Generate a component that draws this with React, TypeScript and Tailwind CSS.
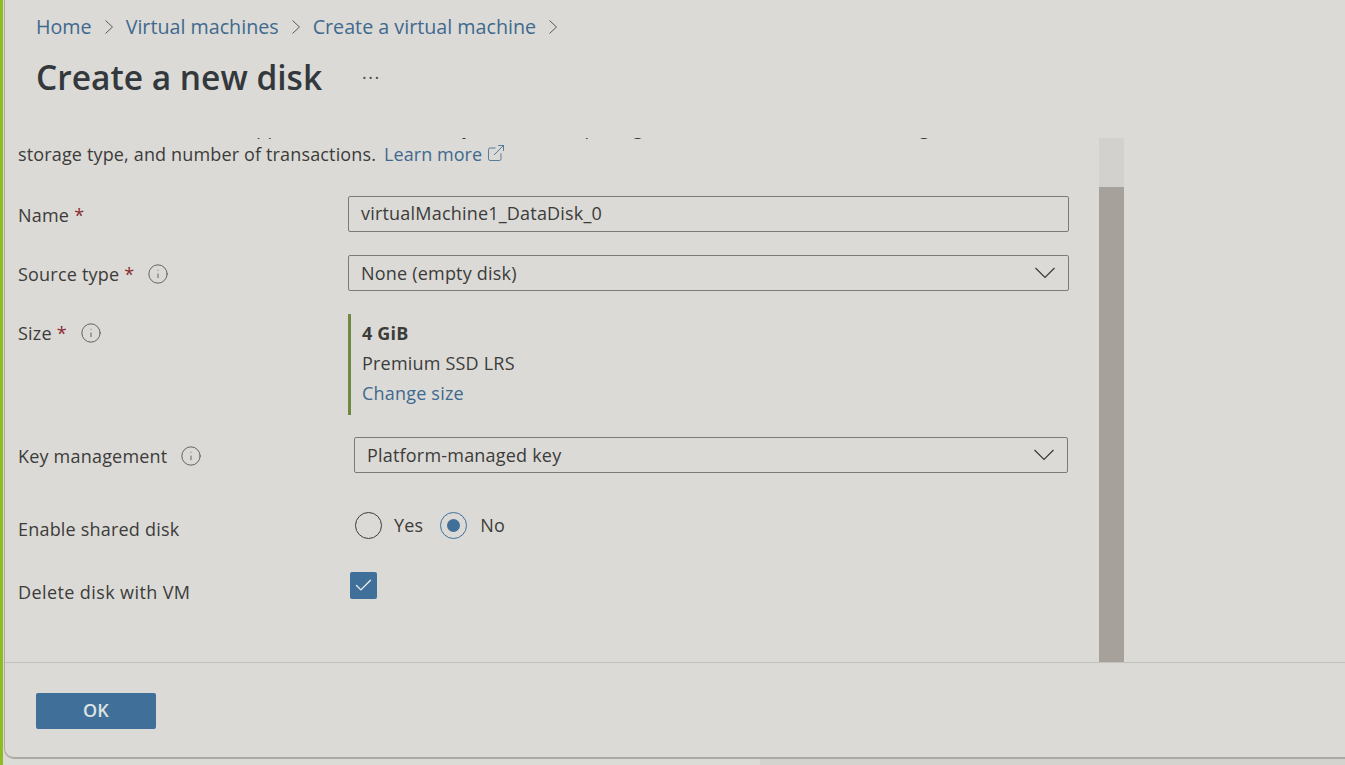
import React from 'react';
import { ExternalLink, Check, Info } from 'lucide-react';

const Crumb: React.FC<{ label: string }> = ({ label }) => (
  <>
    <span className="text-[#40698f]">{label}</span>
    <svg className="w-[10px] h-[16px] mx-[12px] text-[#55595c]" viewBox="0 0 10 16" fill="none" stroke="currentColor" strokeWidth="1">
      <polyline points="1.5,1.5 8.5,8 1.5,14.5" />
    </svg>
  </>
);

const Req = () => <span className="text-[#8a2b32] ml-[5px]">*</span>;

const Tip: React.FC<{ className?: string }> = ({ className }) => (
  <Info className={`w-[22px] h-[22px] text-[#4a4a48] ${className ?? ''}`} strokeWidth={0.9} />
);

const Row: React.FC<{ label: React.ReactNode; className?: string; children: React.ReactNode }> = ({ label, className, children }) => (
  <div className={`flex items-start ${className ?? ''}`}>
    <div className="w-[330px] shrink-0 flex items-center h-[36px] pt-[2px]">{label}</div>
    <div className="flex-1 min-w-0">{children}</div>
  </div>
);

const Select: React.FC<{ value: string; className?: string }> = ({ value, className }) => (
  <div className={`h-[36px] border border-[#7c7b77] rounded-[2px] flex items-center justify-between pl-[12px] pr-[13px] ${className ?? ''}`}>
    <span>{value}</span>
    <svg className="w-[20px] h-[12px] text-[#3a3a39]" viewBox="0 0 20 12" fill="none" stroke="currentColor" strokeWidth="1.2">
      <polyline points="0.5,1 10,10.5 19.5,1" />
    </svg>
  </div>
);

export default function App() {
  return (
    <div className="w-[1345px] h-[765px] overflow-hidden flex bg-[#dbdad6] text-[#3c3c3b] text-[18px] font-['Open_Sans','Noto_Sans',sans-serif] tracking-[0.2px]">
      <div className="w-[3px] shrink-0 bg-[#8fbc22]" />
      <div className="flex-1 flex flex-col min-w-0">
        <div className="h-[759px] ml-[1px] flex flex-col border-l border-b-2 border-[#aaa9a3] rounded-bl-[10px]">
          <div className="h-[138px] shrink-0 pl-[31px]">
            <div className="flex items-center h-[26px] mt-[14px] text-[19.7px] tracking-normal">
              <Crumb label="Home" />
              <Crumb label="Virtual machines" />
              <Crumb label="Create a virtual machine" />
            </div>
            <div className="flex items-center mt-[15px] h-[44px]">
              <h1 className="text-[33.5px] font-semibold text-[#32383c] tracking-normal">Create a new disk</h1>
              <span className="ml-[40px] text-[18px] text-[#4a4a48] leading-none mb-[1px] tracking-[1.5px]">···</span>
            </div>
          </div>

          <div className="flex-1 min-h-0 flex overflow-hidden">
            <div className="w-[1094px] shrink-0 pl-[13px] pr-[30px] overflow-hidden">
              <div className="h-[30px] flex flex-col justify-end overflow-hidden leading-[26px] pb-[1px]">
                <p className="whitespace-nowrap">Create a new disk to store applications and data on your VM. Disk pricing varies based on factors including disk size,</p>
                <div className="flex items-center tracking-[0.15px]">
                  <span>storage type, and number of transactions.</span>
                  <span className="text-[#40698f] ml-[8px] tracking-[0.05px]">Learn more</span>
                  <ExternalLink className="w-[20px] h-[20px] ml-[4px] mb-[3px] text-[#40698f]" strokeWidth={1} />
                </div>
              </div>

              <Row className="mt-[28px]" label={<>Name<Req /></>}>
                <div className="h-[36px] border border-[#7c7b77] rounded-[2px] flex items-center px-[12px] pb-[1px]">virtualMachine1_DataDisk_0</div>
              </Row>

              <Row className="mt-[23px]" label={<>Source type<Req /><Tip className="ml-[13px]" /></>}>
                <Select value="None (empty disk)" />
              </Row>

              <Row className="mt-[23px]" label={<>Size<Req /><Tip className="ml-[13px]" /></>}>
                <div className="h-[101px] border-l-[3px] border-[#6f8a3e] pl-[11px] pb-[3px] flex flex-col justify-center gap-[4px]">
                  <span className="font-bold leading-[26px]">4 GiB</span>
                  <span className="leading-[26px]">Premium SSD LRS</span>
                  <span className="text-[#40698f] leading-[26px]">Change size</span>
                </div>
              </Row>

              <Row className="mt-[22px]" label={<>Key management<Tip className="ml-[13px]" /></>}>
                <Select value="Platform-managed key" className="ml-[6px] mr-[1px]" />
              </Row>

              <Row className="mt-[35px]" label={<span className="mt-[4px]">Enable shared disk</span>}>
                <div className="flex items-center h-[30px] ml-[7px] mt-[2px]">
                  <span className="w-[27px] h-[27px] rounded-full border border-[#3c3c3b]" />
                  <span className="ml-[12px] mt-[1px]">Yes</span>
                  <span className="ml-[17px] w-[27px] h-[27px] rounded-full border border-[#40709a] flex items-center justify-center">
                    <span className="w-[13px] h-[13px] rounded-full bg-[#40709a]" />
                  </span>
                  <span className="ml-[13px] mt-[1px]">No</span>
                </div>
              </Row>

              <Row className="mt-[28px]" label={<span className="mt-[2px] tracking-[0.4px]">Delete disk with VM</span>}>
                <div className="ml-[2px] w-[27px] h-[27px] rounded-[2px] bg-[#40709a] flex items-center justify-center">
                  <Check className="w-[21px] h-[21px] text-[#f0f0ee]" strokeWidth={1.5} />
                </div>
              </Row>
            </div>
            <div className="w-[25px] shrink-0 flex flex-col">
              <div className="h-[49px] bg-[#d2d1cd]" />
              <div className="flex-1 bg-[#a6a19a]" />
            </div>
          </div>

          <div className="h-[95px] shrink-0 border-t border-[#c3c2bd] pl-[31px] pt-[30px]">
            <button className="w-[120px] h-[36px] pb-[2px] rounded-[2px] bg-[#40709a] text-[#dfe3e4] font-semibold">OK</button>
          </div>
        </div>
        <div className="flex-1 flex">
          <div className="w-[757px] bg-[#dcdcd7]" />
          <div className="flex-1 bg-[#d4d3ce]" />
        </div>
      </div>
    </div>
  );
}
